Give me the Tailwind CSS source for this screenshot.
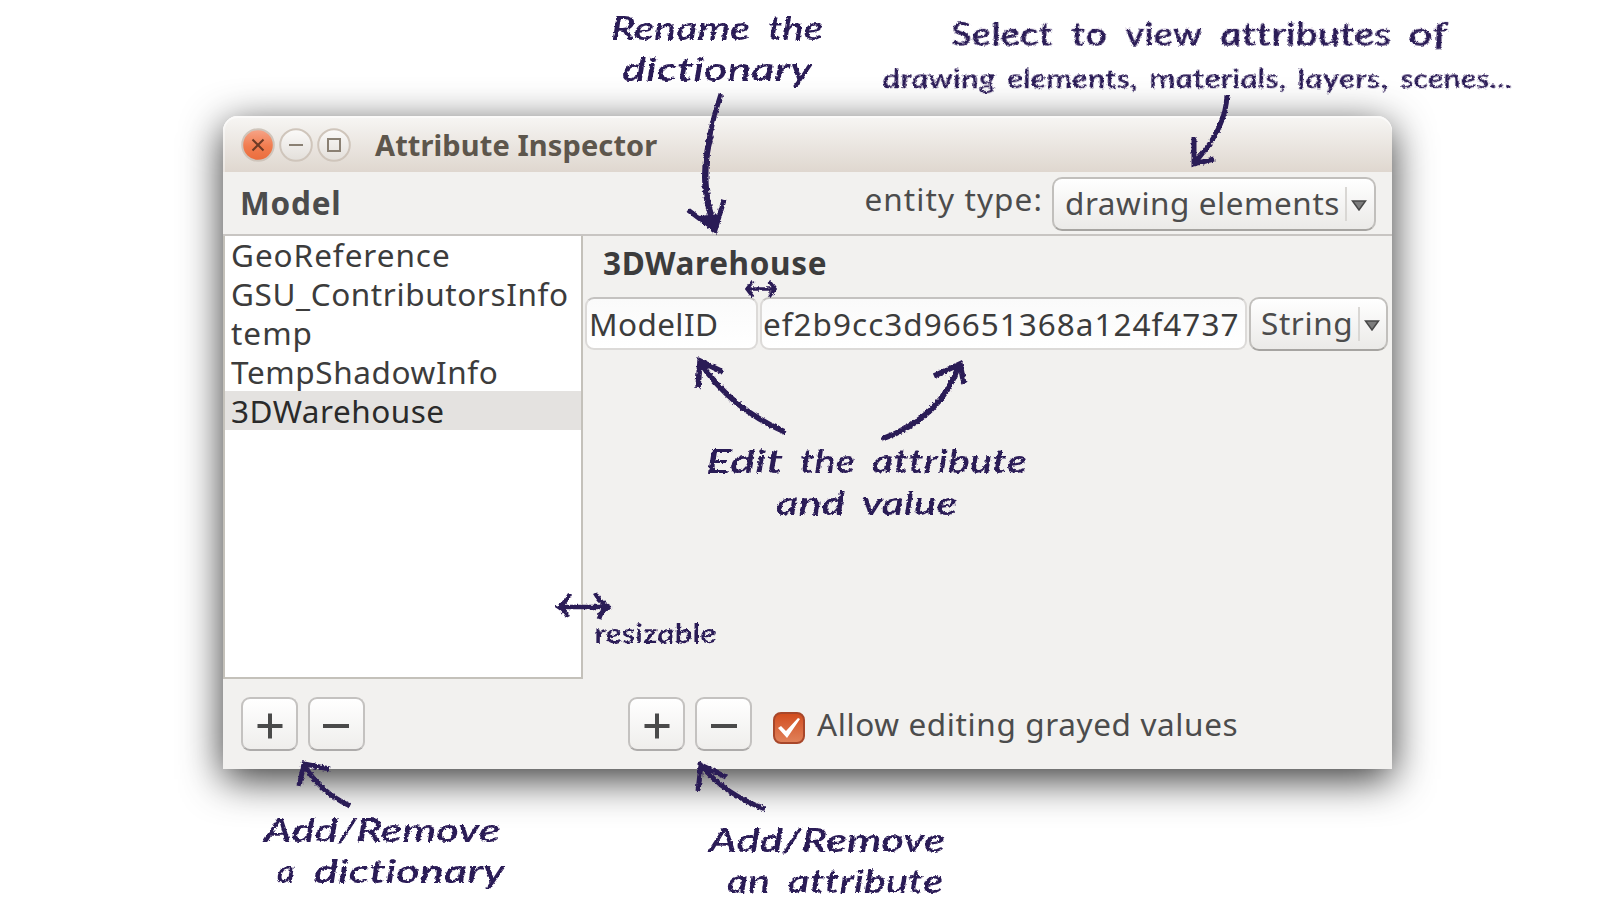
<!DOCTYPE html>
<html lang="en">
<head>
<meta charset="utf-8">
<title>Attribute Inspector</title>
<script src="https://cdn.jsdelivr.net/npm/@tailwindcss/browser@4"></script>
</head>
<body class="relative h-[900px] w-[1615px] overflow-hidden bg-white font-['Noto_Sans',sans-serif] text-[31.5px] leading-[39px] text-[#4c4c4c] whitespace-nowrap">

<main class="ml-[223px] pt-[116px]">
  <section class="flex h-[653px] w-[1169px] flex-col rounded-t-[15px] bg-[#f2f1ef] shadow-[0_10px_40px_rgba(0,0,0,0.8)]">
    <header class="flex h-14 shrink-0 items-center rounded-t-[15px] bg-linear-to-b from-[#f7f6f4] to-[#dfd7cf] pl-[18px] pt-[2px] shadow-[inset_0_2px_0_#fbfaf9,inset_2px_0_0_#ffffff66]">
      <div class="flex gap-1">
        <svg class="size-[34px]" viewBox="0 0 34 34"><defs><linearGradient id="c" x2="0" y2="1"><stop stop-color="#f6a58a"/><stop offset=".55" stop-color="#f17c4e"/><stop offset="1" stop-color="#ea6c3c"/></linearGradient><linearGradient id="g" x2="0" y2="1"><stop stop-color="#fbfaf9"/><stop offset="1" stop-color="#e3dfda"/></linearGradient></defs><circle cx="17" cy="17" r="15.8" fill="url(#c)" stroke="#cfc5bb" stroke-width="2"/><path d="M11.5 11.5l11 11m0-11l-11 11" stroke="#6d3a25" stroke-width="2"/></svg>
        <svg class="size-[34px]" viewBox="0 0 34 34"><circle cx="17" cy="17" r="15.8" fill="url(#g)" stroke="#cfc5bb" stroke-width="2"/><path d="M10 17h14" stroke="#8a8073" stroke-width="2"/></svg>
        <svg class="size-[34px]" viewBox="0 0 34 34"><circle cx="17" cy="17" r="15.8" fill="url(#g)" stroke="#cfc5bb" stroke-width="2"/><path d="M11 11h12v12H11z" fill="none" stroke="#8a8073" stroke-width="2"/></svg>
      </div>
      <h1 class="-mt-[2px] ml-6 text-[29px] font-bold tracking-[0.1px] text-[#5d564c]">Attribute Inspector</h1>
    </header>

    <div class="flex h-16 shrink-0 items-center border-b-2 border-[#c8c5c2] pl-[17px] pr-4">
      <h2 class="-mt-[2px] font-bold tracking-[0.8px]">Model</h2>
      <span class="ml-auto pb-[10px] tracking-[1.1px]">entity type:</span>
      <button class="ml-[9px] mt-[2px] flex h-[54px] w-[324px] items-center rounded-[10px] border-2 border-[#c1bfbc] border-b-[#a6a4a1] bg-linear-to-b from-white to-[#ebeae8] pl-[11px]">
        <span class="-mt-[4px] tracking-[0.55px]">drawing elements</span>
        <i class="ml-auto h-[34px] w-[2px] bg-[#d9d7d4]"></i>
        <svg class="ml-1 mr-[7px] mt-[2px] h-[11px] w-4" viewBox="0 0 16 11"><path d="M1.5 1h13L8 10z" fill="#7d7d7d" stroke="#484848" stroke-width="1.5"/></svg>
      </button>
    </div>

    <div class="flex h-[443px] shrink-0">
      <ul class="w-[360px] border-x-2 border-b-2 border-[#c4c1ba] bg-white text-[#3c3c3c]">
        <li class="-mt-px h-[39px] pl-[6px] tracking-[0.95px]">GeoReference</li>
        <li class="h-[39px] pl-[6px] tracking-[0.6px]">GSU_ContributorsInfo</li>
        <li class="h-[39px] pl-[6px] tracking-[1px]">temp</li>
        <li class="h-[39px] pl-[6px] tracking-[0.6px]">TempShadowInfo</li>
        <li class="h-[39px] bg-[#e4e2e0] pl-[6px] tracking-[0.5px] text-[#2a2a2a]">3DWarehouse</li>
      </ul>
      <div class="flex-1">
        <h3 class="h-[61px] pl-[20px] pt-[7px] font-bold tracking-[0.65px] text-[#3c3c3c]">3DWarehouse</h3>
        <div class="flex gap-[2px] pl-[2px] text-[#3c3c3c]">
          <div class="flex h-[53px] w-[173px] items-center rounded-[9px] border-2 border-[#dcdad8] border-t-[#c4c2c0] bg-linear-to-b from-[#fafafa] to-white pl-[2px] tracking-[0.4px]">ModelID</div>
          <div class="flex h-[53px] w-[487px] items-center rounded-[9px] border-2 border-[#dcdad8] border-t-[#c4c2c0] bg-linear-to-b from-[#fafafa] to-white pl-px tracking-[1px]">ef2b9cc3d96651368a124f4737</div>
          <button class="flex h-[54px] w-[139px] items-center rounded-[10px] border-2 border-[#c1bfbc] border-b-[#a6a4a1] bg-linear-to-b from-white to-[#ebeae8] pl-[10px] text-[#4c4c4c]">
            <span class="-mt-[4px] tracking-[0.6px]">String</span>
            <i class="ml-auto h-[34px] w-[2px] bg-[#d9d7d4]"></i>
            <svg class="ml-1 mr-[6px] mt-[3px] h-[11px] w-4" viewBox="0 0 16 11"><path d="M1.5 1h13L8 10z" fill="#7d7d7d" stroke="#484848" stroke-width="1.5"/></svg>
          </button>
        </div>
      </div>
    </div>

    <footer class="flex flex-1 items-start pl-[18px] pt-[18px]">
      <button class="grid h-[54px] w-[57px] place-items-center rounded-[9px] border-2 border-[#c4c2c0] border-b-[#adabaa] bg-linear-to-b from-white to-[#efeeec]"><svg class="mt-[3px] size-[26px]" viewBox="0 0 26 26"><path d="M.5 13h25M13 .5v25" stroke="#4a4a4a" stroke-width="4"/></svg></button>
      <button class="ml-[10px] grid h-[54px] w-[57px] place-items-center rounded-[9px] border-2 border-[#c4c2c0] border-b-[#adabaa] bg-linear-to-b from-white to-[#efeeec]"><svg class="-ml-[2px] mt-[3px] size-[26px]" viewBox="0 0 26 26"><path d="M0 13h26" stroke="#4a4a4a" stroke-width="4"/></svg></button>
      <button class="ml-[263px] grid h-[54px] w-[57px] place-items-center rounded-[9px] border-2 border-[#c4c2c0] border-b-[#adabaa] bg-linear-to-b from-white to-[#efeeec]"><svg class="mt-[3px] size-[26px]" viewBox="0 0 26 26"><path d="M.5 13h25M13 .5v25" stroke="#4a4a4a" stroke-width="4"/></svg></button>
      <button class="ml-[10px] grid h-[54px] w-[57px] place-items-center rounded-[9px] border-2 border-[#c4c2c0] border-b-[#adabaa] bg-linear-to-b from-white to-[#efeeec]"><svg class="mt-[3px] size-[26px]" viewBox="0 0 26 26"><path d="M0 13h26" stroke="#4a4a4a" stroke-width="4"/></svg></button>
      <span class="ml-[21px] mt-[15px] grid size-8 place-items-center rounded-[8px] border-2 border-[#a8472a] bg-linear-to-b from-[#d24d1d] to-[#e08058]"><svg class="size-7" viewBox="0 0 28 28"><path d="M3 14l3-2 5 5L23 4l2 1-13 19z" fill="#fff"/></svg></span>
      <span class="ml-3 mt-[7px] tracking-[0.62px]">Allow editing grayed values</span>
    </footer>
  </section>
</main>

<!-- Handwritten notes and arrows laid over the window -->
<svg class="absolute inset-0 h-[900px] w-[1615px] font-[Lato,sans-serif] font-semibold italic [font-variant-ligatures:none]" viewBox="0 0 1615 900" fill="#2c1b57">
  <defs><filter id="chalk" x="0" y="0" width="1615" height="900" filterUnits="userSpaceOnUse"><feTurbulence type="fractalNoise" baseFrequency=".35" numOctaves="2" seed="4"/><feDisplacementMap in="SourceGraphic" scale="3.5" xChannelSelector="R" yChannelSelector="G"/></filter></defs>
  <g filter="url(#chalk)">
    <g class="text-[32px]">
      <text y="39.5"><tspan x="611" textLength="139" lengthAdjust="spacingAndGlyphs">Rename</tspan> <tspan x="768" textLength="55" lengthAdjust="spacingAndGlyphs">the</tspan></text>
      <text x="622" y="80.5" textLength="190" lengthAdjust="spacingAndGlyphs">dictionary</text>
      <text y="472.5"><tspan x="706" textLength="77" lengthAdjust="spacingAndGlyphs">Edit</tspan> <tspan x="800" textLength="55" lengthAdjust="spacingAndGlyphs">the</tspan> <tspan x="872" textLength="155" lengthAdjust="spacingAndGlyphs">attribute</tspan></text>
      <text y="515"><tspan x="776" textLength="69" lengthAdjust="spacingAndGlyphs">and</tspan> <tspan x="862" textLength="95" lengthAdjust="spacingAndGlyphs">value</tspan></text>
      <text x="264" y="841.5" textLength="236" lengthAdjust="spacingAndGlyphs">Add/Remove</text>
      <text y="883"><tspan x="277" textLength="18" lengthAdjust="spacingAndGlyphs">a</tspan> <tspan x="314" textLength="191" lengthAdjust="spacingAndGlyphs">dictionary</tspan></text>
      <text x="709" y="851.5" textLength="236" lengthAdjust="spacingAndGlyphs">Add/Remove</text>
      <text y="893"><tspan x="727" textLength="43" lengthAdjust="spacingAndGlyphs">an</tspan> <tspan x="788" textLength="155" lengthAdjust="spacingAndGlyphs">attribute</tspan></text>
    </g>
    <text transform="translate(1.5 46) skewX(8)" class="text-[33px]"><tspan x="951" textLength="102" lengthAdjust="spacingAndGlyphs">Select</tspan> <tspan x="1071" textLength="36" lengthAdjust="spacingAndGlyphs">to</tspan> <tspan x="1125" textLength="77" lengthAdjust="spacingAndGlyphs">view</tspan> <tspan x="1220" textLength="171" lengthAdjust="spacingAndGlyphs">attributes</tspan> <tspan x="1408" textLength="40" lengthAdjust="spacingAndGlyphs">of</tspan></text>
    <text transform="translate(1.5 88.5) skewX(8)" class="text-[27px]"><tspan x="882" textLength="113" lengthAdjust="spacingAndGlyphs">drawing</tspan> <tspan x="1007" textLength="130" lengthAdjust="spacingAndGlyphs">elements,</tspan> <tspan x="1149" textLength="137" lengthAdjust="spacingAndGlyphs">materials,</tspan> <tspan x="1297" textLength="91" lengthAdjust="spacingAndGlyphs">layers,</tspan> <tspan x="1400" textLength="112" lengthAdjust="spacingAndGlyphs">scenes...</tspan></text>
    <text transform="translate(595.5 643) skewX(8)" class="text-[27px]" textLength="122" lengthAdjust="spacingAndGlyphs">resizable</text>
  </g>
  <g filter="url(#chalk)" fill="none" stroke="#2c1b57" stroke-width="5.5">
    <path d="M721 94Q694 172 715 230M688 210L715 230L724 200" stroke-width="5"/>
    <path d="M711 135Q699 178 711 215" stroke-width="6"/>
    <path d="M699 216L716 233L720 214Z" fill="#2c1b57" stroke="none"/>
    <path d="M1227 95Q1226 128 1196 161M1194 137V164L1214 159" stroke-width="5"/>
    <path d="M785 432Q730 408 700 362M723 372L700 361L698 388"/>
    <path d="M882 439Q941 418 959 365M934 376L960 364L964 384"/>
    <path d="M350 806Q320 792 304 765M330 769L304 764L299 786" stroke-width="5"/>
    <path d="M765 809Q724 794 701 765M726 777L701 765L698 791" stroke-width="5"/>
  </g>
  <g filter="url(#chalk)" fill="none" stroke="#2c1b57" stroke-width="4.5">
    <path d="M747 289H775M753 281L747 289L753 297M769 281L775 289L769 297" stroke-width="3.5"/>
    <path d="M560 607H608M570 594Q565 603 559 607Q564 610 568 617M595 593Q600 602 608 607Q601 611 599 619"/>
  </g>
</svg>
</body>
</html>
